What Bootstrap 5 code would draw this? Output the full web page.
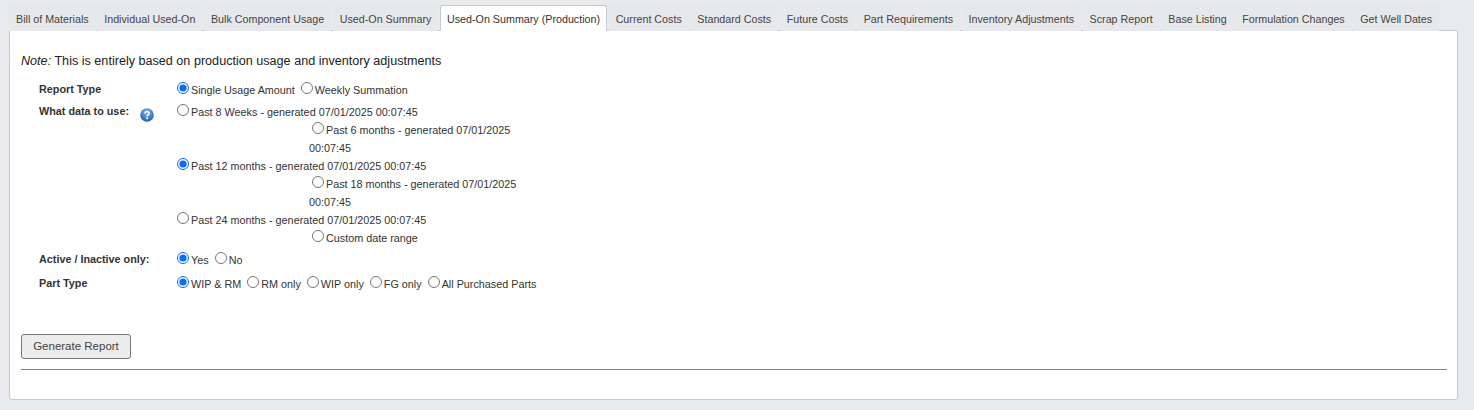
<!DOCTYPE html>
<html lang="en">
<head>
<meta charset="utf-8">
<title>Used-On Summary (Production)</title>
<link rel="stylesheet" href="https://cdn.jsdelivr.net/npm/bootstrap@5.3.0/dist/css/bootstrap.min.css">
<style>
html,body{height:100%}
body{background:#e8eaee;font-family:"Liberation Sans",Arial,sans-serif;color:#222;padding:5px 16px 10px 9px;overflow:hidden;font-size:10.8px}
.rep-tabs{border-bottom:0;flex-wrap:nowrap;height:26px;position:relative;z-index:1;margin-bottom:-1px}
.rep-tabs .nav-link{font-size:10.72px;line-height:13px;color:#444;background:#e7e8eb;border:1px solid transparent;border-radius:3px 3px 0 0;padding:7px 6px 5px;margin:0 1.55px 0 0;height:26px;white-space:nowrap}
.rep-tabs .nav-link.active{background:#fff;color:#333;border-color:#c5c9d3 #c5c9d3 #fff}
.rep-panel{background:#fff;border:1px solid #c5c9d3;border-radius:0 0 3px 3px;height:370px;padding:17px 10px 0 11px}
.rep-note{font-size:12.62px;line-height:26px;margin:0 0 7px;color:#222}
.rep-row{display:flex;padding-left:18px}
.rep-label{width:137px;flex:none;font-weight:700;font-size:10.8px;color:#333;display:flex;align-items:flex-start}
.rep-opts{line-height:18px;color:#333}
.rep-opts input{margin:0 2px 0 1px;width:12px;height:12px;accent-color:#0a6cf5;vertical-align:0}
.rep-opts label{margin-right:2px}
.rep-shift{margin-left:133px;width:212px}
.rep-shift input{margin-left:3px;margin-right:2px}
.rep-help{margin:5px 0 0 11px}
.rep-btn{font-size:11.5px;line-height:14px;color:#444;background:#ececec;border:1px solid #777;border-radius:3px;padding:0 0 2px;height:25px;width:110px;margin-top:41px;white-space:nowrap}
.rep-btn:hover{background:#ececec;border-color:#777;color:#444}
.rep-rule{border:0;border-top:1px solid #888;opacity:1;margin:10px 0 0}
.rep-gap{margin-bottom:6px}
</style>
</head>
<body>
<ul class="nav nav-tabs rep-tabs">
<li class="nav-item"><a class="nav-link" href="#">Bill of Materials</a></li>
<li class="nav-item"><a class="nav-link" href="#">Individual Used-On</a></li>
<li class="nav-item"><a class="nav-link" href="#">Bulk Component Usage</a></li>
<li class="nav-item"><a class="nav-link" href="#">Used-On Summary</a></li>
<li class="nav-item"><a class="nav-link active" href="#">Used-On Summary (Production)</a></li>
<li class="nav-item"><a class="nav-link" href="#">Current Costs</a></li>
<li class="nav-item"><a class="nav-link" href="#">Standard Costs</a></li>
<li class="nav-item"><a class="nav-link" href="#">Future Costs</a></li>
<li class="nav-item"><a class="nav-link" href="#">Part Requirements</a></li>
<li class="nav-item"><a class="nav-link" href="#">Inventory Adjustments</a></li>
<li class="nav-item"><a class="nav-link" href="#">Scrap Report</a></li>
<li class="nav-item"><a class="nav-link" href="#">Base Listing</a></li>
<li class="nav-item"><a class="nav-link" href="#">Formulation Changes</a></li>
<li class="nav-item"><a class="nav-link" href="#">Get Well Dates</a></li>
</ul>
<div class="rep-panel">
<p class="rep-note"><em>Note:</em> This is entirely based on production usage and inventory adjustments</p>
<div class="rep-row mb-1">
<div class="rep-label">Report Type</div>
<div class="rep-opts">
<label><input type="radio" name="rt" checked>Single Usage Amount</label>
<label><input type="radio" name="rt">Weekly Summation</label>
</div>
</div>
<div class="rep-row mb-1">
<div class="rep-label">What data to use:
<svg class="rep-help" width="14" height="14" viewBox="0 0 14 14" aria-hidden="true"><defs><radialGradient id="hb" cx="50%" cy="30%" r="70%"><stop offset="0" stop-color="#7db9ee"/><stop offset="1" stop-color="#1b5fae"/></radialGradient></defs><circle cx="7" cy="7" r="6.8" fill="url(#hb)"/><path d="M5 5.4C5 4.2 6 3.6 7 3.6s2.1.6 2.1 1.8c0 1.5-2 1.5-2 3" fill="none" stroke="#fff" stroke-width="1.5"/><circle cx="7.1" cy="10.2" r="1" fill="#fff"/></svg>
</div>
<div class="rep-opts">
<div><label><input type="radio" name="d">Past 8 Weeks - generated 07/01/2025 00:07:45</label></div>
<div class="rep-shift"><label><input type="radio" name="d">Past 6 months - generated 07/01/2025 00:07:45</label></div>
<div><label><input type="radio" name="d" checked>Past 12 months - generated 07/01/2025 00:07:45</label></div>
<div class="rep-shift"><label><input type="radio" name="d">Past 18 months - generated 07/01/2025 00:07:45</label></div>
<div><label><input type="radio" name="d">Past 24 months - generated 07/01/2025 00:07:45</label></div>
<div class="rep-shift"><label><input type="radio" name="d">Custom date range</label></div>
</div>
</div>
<div class="rep-row rep-gap">
<div class="rep-label">Active / Inactive only:</div>
<div class="rep-opts">
<label><input type="radio" name="a" checked>Yes</label>
<label><input type="radio" name="a">No</label>
</div>
</div>
<div class="rep-row">
<div class="rep-label">Part Type</div>
<div class="rep-opts">
<label><input type="radio" name="p" checked>WIP &amp; RM</label>
<label><input type="radio" name="p">RM only</label>
<label><input type="radio" name="p">WIP only</label>
<label><input type="radio" name="p">FG only</label>
<label><input type="radio" name="p">All Purchased Parts</label>
</div>
</div>
<button type="button" class="btn rep-btn">Generate Report</button>
<hr class="rep-rule">
</div>
<script src="https://cdn.jsdelivr.net/npm/bootstrap@5.3.0/dist/js/bootstrap.bundle.min.js"></script>
</body>
</html>
